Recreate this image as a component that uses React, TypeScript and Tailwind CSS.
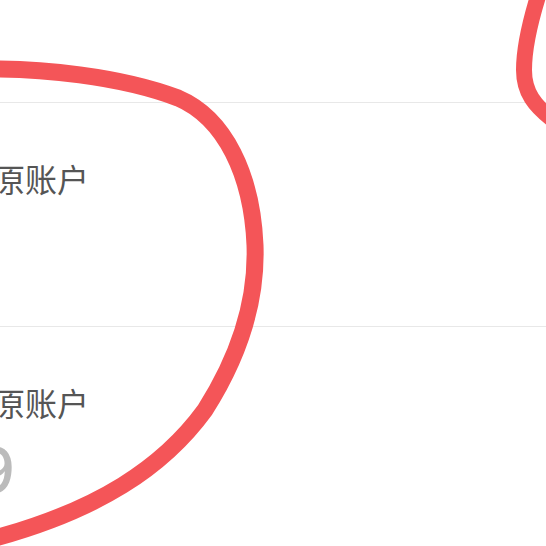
import React from "react";

const cjk = { fontFamily: '"Noto Sans CJK SC", "Noto Sans", sans-serif' };

export default function App() {
  return (
    <div className="relative w-[546px] h-[546px] overflow-hidden bg-white">
      {/* rows */}
      <div className="h-[103px] border-b border-[#e8e8e8]" />
      <div className="h-[224px] border-b border-[#e8e8e8] pt-[59px]">
        <div className="ml-[-7px] text-[32px] leading-none text-[#555555]" style={cjk}>
          原账户
        </div>
      </div>
      <div className="pt-[59px]">
        <div className="ml-[-7px] text-[32px] leading-none text-[#555555]" style={cjk}>
          原账户
        </div>
        <div
          className="ml-[-23px] mt-[17px] text-[66px] font-medium leading-none text-[#bbbbbb]"
          style={{ fontFamily: '"Noto Sans", sans-serif' }}
        >
          9
        </div>
      </div>

      {/* hand-drawn annotation marks */}
      <svg
        className="absolute inset-0 pointer-events-none"
        width="546"
        height="546"
        viewBox="0 0 546 546"
        fill="none"
      >
        <path
          d="M-20 69 C 40 68, 120 76, 178 98 C 225 118, 252 175, 255 245 C 257 300, 240 355, 205 410 C 165 465, 100 512, -20 542"
          stroke="#f45558"
          strokeWidth="17"
          strokeLinecap="round"
        />
        <path
          d="M540 -10 C 532 15, 524 45, 524 70 C 524 92, 534 106, 556 122"
          stroke="#f45558"
          strokeWidth="16"
          strokeLinecap="round"
        />
      </svg>
    </div>
  );
}
